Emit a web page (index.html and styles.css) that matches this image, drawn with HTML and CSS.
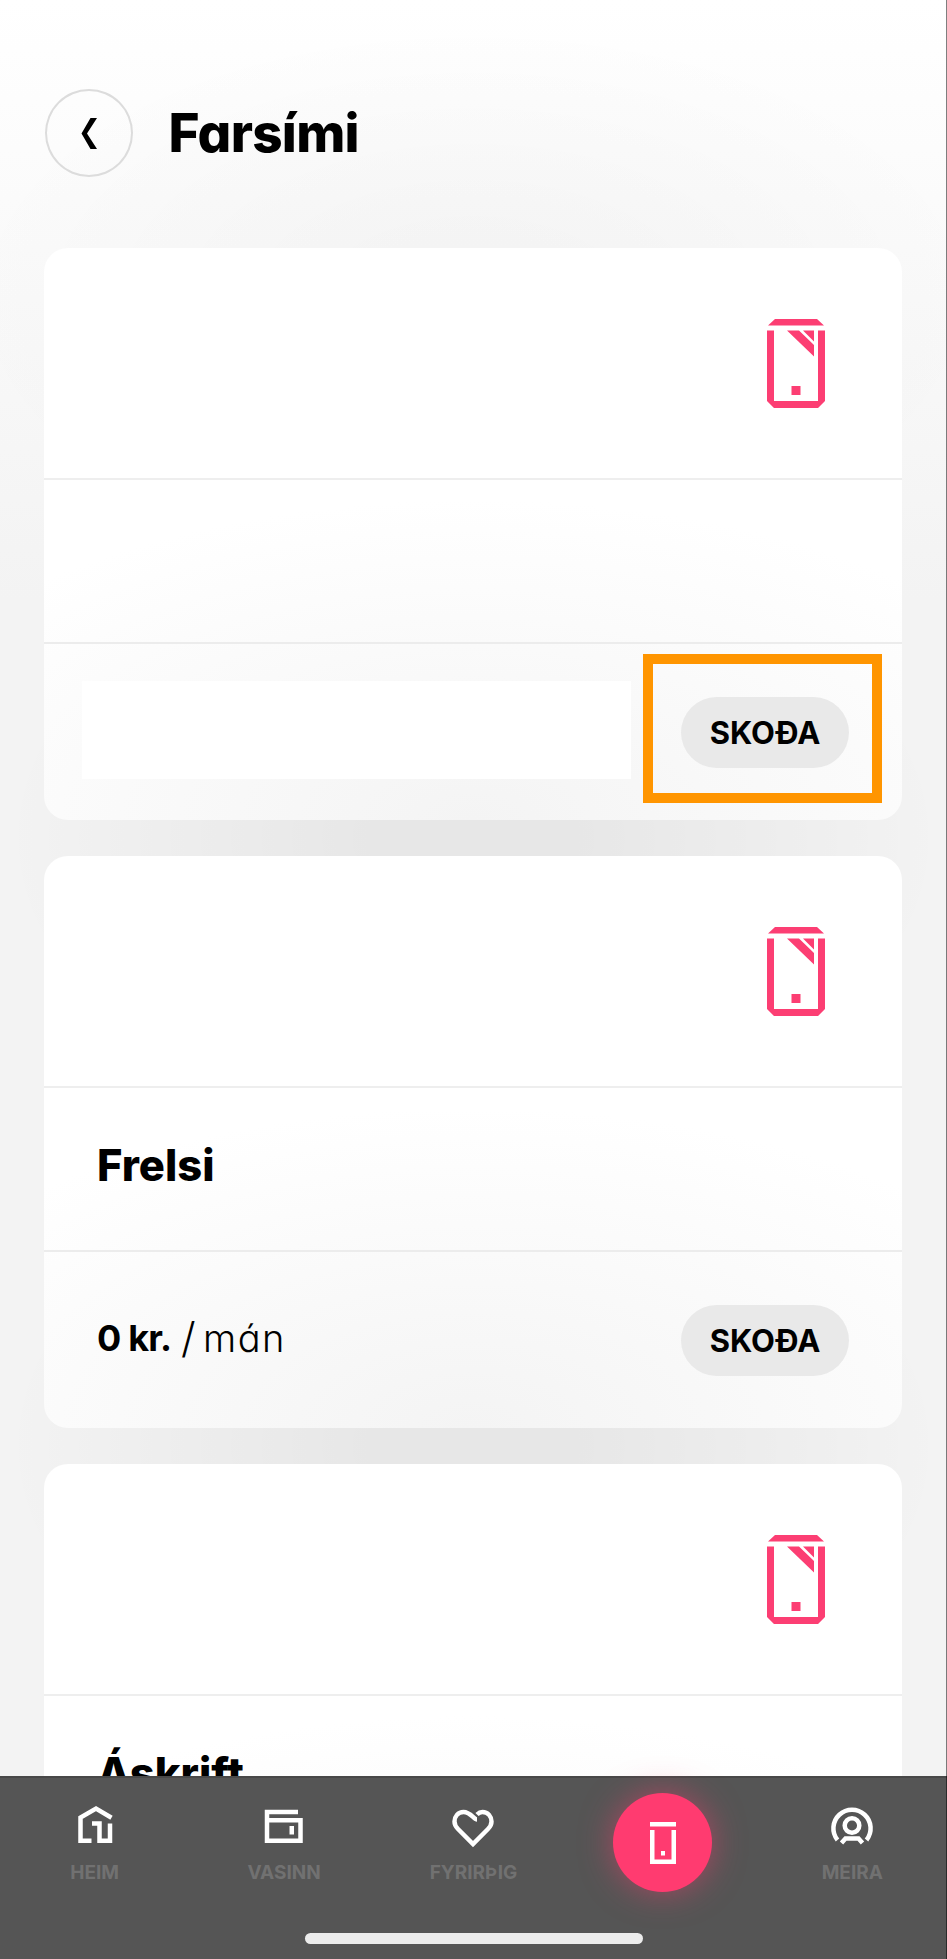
FILE: index.html
```html
<!DOCTYPE html>
<html lang="is">
<head>
<meta charset="utf-8">
<title>Farsími</title>
<link rel="stylesheet" href="styles.css">
</head>
<body>
<svg width="0" height="0" class="defs">
  <symbol id="phone" viewBox="0 0 58 89">
    <path d="M8 0H50L57 6.500H1ZM0 11.500H7V82H51V11.500H58V82L51 89H7L0 82ZM20 11.500H32L47 26V37.500ZM36 11.500H47V22.500ZM24.500 67H33.500V76H24.500Z"/>
  </symbol>
</svg>
<div class="screen">
  <header class="header">
    <button class="back" aria-label="Til baka"><svg width="88" height="88" viewBox="0 0 88 88"><path d="M45.500 29H52L42 44.500L52 60H45.500L36.500 44.500Z"/></svg></button>
    <h1 class="title">Farsími</h1>
  </header>
  <main class="cards">
    <section class="card">
      <div class="card-top"><svg class="phone"><use href="#phone"/></svg></div>
      <div class="card-name"></div>
      <div class="card-bottom card-bottom-masked"><span class="mask"></span><span class="highlight"></span><button class="view"><span>SKOÐA</span></button></div>
    </section>
    <section class="card">
      <div class="card-top"><svg class="phone"><use href="#phone"/></svg></div>
      <div class="card-name"><span class="plan">Frelsi</span></div>
      <div class="card-bottom"><p class="price"><b>0 kr.</b><span class="slash">/</span><span class="month">mán</span></p><button class="view"><span>SKOÐA</span></button></div>
    </section>
    <section class="card">
      <div class="card-top"><svg class="phone"><use href="#phone"/></svg></div>
      <div class="card-name"><span class="plan">Áskrift</span></div>
      <div class="card-bottom"></div>
    </section>
  </main>
  <nav class="nav">
    <div class="tabs">
      <a class="tab"><svg width="48" height="48" viewBox="0 0 48 48"><path class="line" d="M20.500 38.800H9.500V15.500L25 6.500L40.500 15.800M21 21.500H28.500V38.800H39V21.500"/></svg><span>HEIM</span></a>
      <a class="tab"><svg width="48" height="48" viewBox="0 0 48 48"><path class="line" d="M38 10H7V38.800H40.500V18.200H7"/><path d="M29.500 24H34V32.500H29.500Z"/></svg><span>VASINN</span></a>
      <a class="tab"><svg width="48" height="48" viewBox="0 0 48 48"><path class="line" d="M28 17.500C25 17.500 21.500 10 14.500 10C9 10 5.500 14.500 5.500 19.500C5.500 23 7 25 9 27L24 42L39 27C41 25 42.500 23 42.500 19.500C42.500 14.500 39 10 33.500 10C31 10 29.500 11 28 12.500"/></svg><span>FYRIRÞIG</span></a>
      <a class="tab tab-active"><span class="bubble"><svg width="26" height="42" viewBox="0 0 26 42"><path d="M0 0H26V4.500H0ZM0 8H4.500V37.500H21.500V8H26V42H0ZM11 29H15V33.500H11Z"/></svg></span></a>
      <a class="tab"><svg width="48" height="48" viewBox="0 0 48 48"><path class="line" d="M9.500 38A18.600 18.600 0 1 1 38.500 38M13.500 41L17.500 36.500H30.500L34.500 41"/><circle class="line" cx="24" cy="23.500" r="7.300"/></svg><span>MEIRA</span></a>
    </div>
    <div class="home-bar"></div>
  </nav>
</div>
</body>
</html>
```
FILE: styles.css
```css
* { box-sizing: border-box; }
body {
  margin: 0;
  background: #fff;
  color: #000;
  font-family: Inter, "Noto Sans", sans-serif;
  font-feature-settings: "cv11";
}
.defs { position: absolute; }
.screen {
  position: relative;
  display: flex;
  flex-direction: column;
  height: 1959px;
  overflow: hidden;
  background:
    radial-gradient(ellipse 520px 280px at 50% 300px, rgba(0, 0, 0, .03), transparent),
    radial-gradient(ellipse 470px 300px at 50% 838px, rgba(0, 0, 0, .05) 20%, transparent),
    radial-gradient(ellipse 470px 300px at 50% 1446px, rgba(0, 0, 0, .05) 20%, transparent),
    linear-gradient(#fff 0, #fafafa 248px, #f3f3f3 600px);
}
.screen::after {
  content: "";
  position: absolute;
  top: 0;
  right: 0;
  width: 1px;
  height: 100%;
  background: rgba(0, 0, 0, .5);
}
button {
  border: 0;
  padding: 0;
  background: none;
  color: inherit;
  font: inherit;
  font-feature-settings: inherit;
}
.header {
  display: flex;
  align-items: center;
  gap: 36px;
  flex: none;
  height: 248px;
  padding: 88px 45px 71px 44.500px;
}
.back {
  width: 88px;
  height: 88px;
  border-radius: 50%;
  box-shadow: inset 0 0 0 2px #dcdcdc;
}
.back svg { display: block; }
.title {
  margin: 0;
  font-size: 53px;
  line-height: 60px;
  font-weight: 800;
  letter-spacing: -.700px;
}
.cards {
  display: flex;
  flex-direction: column;
  gap: 36px;
  flex: 1;
  min-height: 0;
  padding: 0 45px 0 44px;
}
.card {
  flex: none;
  height: 572px;
  border-radius: 24px;
  background: radial-gradient(ellipse 650px 320px at 50% 100%, #f4f4f4, #fff);
}
.card-top {
  display: flex;
  justify-content: flex-end;
  height: 232px;
  padding: 70.500px 77px 0 0;
  border-bottom: 2px solid #eee;
}
.phone { width: 58px; height: 89px; fill: #fc3e73; }
.card-name {
  display: flex;
  align-items: center;
  height: 164px;
  padding: 0 54px 8px 53px;
  border-bottom: 2px solid #ececec;
}
.plan { font-size: 43.500px; line-height: 50px; font-weight: 800; letter-spacing: 0; }
.card-bottom {
  position: relative;
  display: flex;
  align-items: center;
  justify-content: space-between;
  height: 176px;
  padding: 0 53px;
}
.card-bottom-masked { padding-left: 38px; }
.mask { flex: none; width: 549px; height: 98px; margin-bottom: 4px; background: #fff; }
.highlight {
  position: absolute;
  left: 599px;
  top: 9.500px;
  width: 239px;
  height: 149px;
  border: 10.500px solid #ff9500;
}
.price { display: flex; margin: 0 0 4px; font-size: 36px; line-height: 44px; }
.price b { width: 84px; letter-spacing: -.800px; white-space: nowrap; }
.slash { width: 22px; font-size: 42px; font-weight: 300; }
.month { font-weight: 350; font-size: 38px; letter-spacing: 1.500px; }
.view {
  width: 168px;
  height: 71px;
  border-radius: 36px;
  background: #e9e9e9;
  font-size: 31px;
  font-weight: 700;
}
.nav {
  position: absolute;
  left: 0;
  right: 0;
  bottom: 0;
  height: 183px;
  border-top: 2px solid #484848;
  background: #555;
}
.tabs {
  display: grid;
  grid-template-columns: repeat(5, 1fr);
}
.tab {
  display: flex;
  flex-direction: column;
  align-items: center;
  gap: 8.500px;
  padding-top: 24px;
  color: #717171;
  font-size: 19px;
  line-height: 28px;
  font-weight: 700;
}
.tab svg { fill: #fff; }
.tab .line { fill: none; stroke: #fff; stroke-width: 4.500; }
.tab-active { padding-top: 15px; }
.bubble {
  display: flex;
  align-items: center;
  justify-content: center;
  width: 99px;
  height: 99px;
  border-radius: 50%;
  background: #ff3b70;
  box-shadow: 0 0 32px rgba(255, 59, 112, .5);
}
.home-bar {
  position: absolute;
  left: 305px;
  bottom: 15px;
  width: 338px;
  height: 11px;
  border-radius: 6px;
  background: #ececec;
}
```
